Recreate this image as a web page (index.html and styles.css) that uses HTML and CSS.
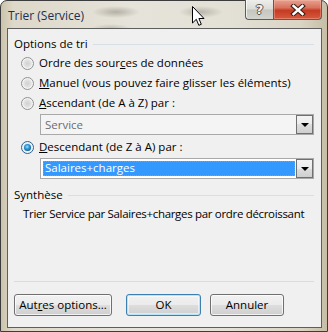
FILE: index.html
```html
<!DOCTYPE html>
<html lang="fr">
<head>
<meta charset="utf-8">
<title>Trier (Service)</title>
<link rel="stylesheet" href="styles.css">
</head>
<body>
<div class="window">
  <div class="titlebar">
    <span class="title">Trier (Service)</span>
    <div class="caption-btns">
      <div class="cap help"><span>?</span></div>
      <div class="cap close">
        <svg width="16" height="12" viewBox="0 0 16 12">
          <path d="M3.5 2 L12.5 10 M12.5 2 L3.5 10" stroke="#3b2018" stroke-width="4.6" stroke-linecap="square"/>
          <path d="M3.5 2 L12.5 10 M12.5 2 L3.5 10" stroke="#ffffff" stroke-width="2.4" stroke-linecap="square"/>
        </svg>
      </div>
    </div>
  </div>
  <div class="client">
    <div class="group-head"><span>Options de tri</span><i class="rule"></i></div>
    <div class="radio-row"><span class="radio"></span><span>Ordre des sour<u>c</u>es de données</span></div>
    <div class="radio-row"><span class="radio"></span><span><u>M</u>anuel (vous pouvez faire glisser les éléments)</span></div>
    <div class="radio-row"><span class="radio"></span><span><u>A</u>scendant (de A à Z) par :</span></div>
    <div class="combo disabled">
      <span class="combo-text">Service</span>
      <span class="drop"><i class="tri"></i></span>
    </div>
    <div class="radio-row r4"><span class="radio checked"></span><span><u>D</u>escendant (de Z à A) par :</span></div>
    <div class="combo active">
      <span class="combo-sel">Salaires+charges</span>
      <span class="drop"><i class="tri"></i></span>
    </div>
    <div class="group-head g2"><span>Synthèse</span><i class="rule"></i></div>
    <div class="summary">Trier Service par Salaires+charges par ordre décroissant</div>
    <div class="spacer"></div>
    <div class="footer">
      <div class="btn b1">Aut<u>r</u>es options...</div>
      <div class="btn ok">OK</div>
      <div class="btn b3">Annuler</div>
    </div>
  </div>
  <svg class="cursor" width="13" height="21" viewBox="0 0 13 21">
    <path d="M0.5 0.5 V17 L4.3 13.3 L6.8 19.3 L9.3 18.3 L6.9 12.5 L12 12.5 Z" fill="#fff" stroke="#000" stroke-linejoin="miter"/>
  </svg>
</div>
</body>
</html>
```

FILE: styles.css
```css
* { box-sizing: border-box; }
html, body { margin: 0; padding: 0; }
body {
  width: 328px;
  height: 332px;
  overflow: hidden;
  font-family: "Open Sans", "Noto Sans", sans-serif;
  font-size: 11.5px;
  color: #000;
  background: #fff;
}
.window {
  position: relative;
  width: 328px;
  height: 332px;
  border: 1px solid #3c3c3c;
  border-radius: 7px 7px 0 0;
  display: flex;
  flex-direction: column;
  background:
    radial-gradient(ellipse 24px 6px at 115px 11px, rgba(120,115,105,0.45), transparent),
    radial-gradient(ellipse 22px 6px at 200px 11px, rgba(120,115,105,0.40), transparent),
    radial-gradient(ellipse 20px 4px at 110px 27px, rgba(120,115,105,0.30), transparent),
    linear-gradient(to right, #cbc3ab 0px, #ddd8c9 12px, #e6e3da 40%, #e3e0d6 70%, #d9d4c4 92%, #c6bea5 100%);
}
.titlebar {
  height: 27px;
  display: flex;
  align-items: flex-start;
  justify-content: space-between;
}
.title {
  margin: 7px 0 0 7px;
  color: #1c2f55;
  font-size: 12px;
  line-height: 16px;
}
.caption-btns {
  display: flex;
  margin-top: -1px;
  margin-right: 5px;
}
.cap {
  height: 20px;
  display: flex;
  align-items: center;
  justify-content: center;
  border: 1px solid #5b5b5b;
  border-top: none;
}
.help {
  width: 28px;
  border-right: none;
  border-radius: 0 0 0 4px;
  background: linear-gradient(to bottom, #eeeeec 0%, #dcdcd8 45%, #c6c6c0 55%, #d4d4ce 100%);
  box-shadow: inset 1px 0 0 rgba(255,255,255,0.7);
}
.help span {
  font-family: "DejaVu Sans", sans-serif;
  font-weight: bold;
  font-size: 13px;
  line-height: 14px;
  color: #f4f4f4;
  text-shadow: -1px 0 0 #55554f, 1px 0 0 #55554f, 0 -1px 0 #55554f, 0 1px 0 #55554f;
}
.close {
  width: 49px;
  border-radius: 0 0 4px 0;
  background: linear-gradient(to bottom, #e7a290 0%, #d8735f 40%, #c43b22 55%, #d55a3f 100%);
  box-shadow: inset 0 0 0 1px rgba(255,200,190,0.35);
}
.close svg { display: block; }
.client {
  flex: 1;
  margin: 0 5px 3px 6px;
  border: 1px solid #5e5e5e;
  background: #f0f0f0;
  padding-top: 5px;
  display: flex;
  flex-direction: column;
}
.group-head {
  height: 19px;
  display: flex;
  align-items: center;
  padding-left: 6px;
  margin-right: 7px;
  line-height: 19px;
}
.group-head .rule {
  flex: 1;
  height: 1px;
  margin-left: 5px;
  margin-top: 1px;
  background: #d5dfe5;
}
.g2 { margin-top: 6px; }
.radio-row {
  height: 20px;
  display: flex;
  align-items: center;
  padding-left: 13px;
  line-height: 20px;
  white-space: nowrap;
}
.radio-row.r4 { margin-top: 2px; }
.radio {
  width: 13px;
  height: 13px;
  margin-right: 5px;
  border-radius: 50%;
  border: 1px solid #8f9293;
  background: radial-gradient(circle at 50% 50%, #d0d0d0 0%, #e2e2e2 45%, #f3f3f3 75%, #ffffff 100%);
  box-shadow: inset 0 0 0 1px #f4f4f4;
  flex: none;
  position: relative;
}
.radio.checked {
  border-color: #2c628b;
  background: radial-gradient(circle at 50% 50%, #bdd7ea 0%, #ffffff 100%);
}
.radio.checked::after {
  content: "";
  position: absolute;
  left: 2px; top: 2px;
  width: 7px; height: 7px;
  border-radius: 50%;
  background: radial-gradient(circle at 45% 40%, #9fe0ff 0%, #2f9fe0 35%, #14528a 80%, #153d63 100%);
}
u { text-decoration: underline; text-underline-offset: 1px; }
.combo {
  height: 21px;
  margin-left: 32px;
  margin-right: 7px;
  margin-top: 1px;
  border: 1px solid #a9a9a9;
  display: flex;
  align-items: stretch;
}
.combo.disabled { background: #f4f4f4; color: #6d6d6d; }
.combo.active { background: #fff; }
.combo-text {
  flex: 1;
  padding-left: 4px;
  line-height: 19px;
}
.combo-sel {
  flex: 1;
  margin: 2px 1px 2px 2px;
  background: #3399ff;
  color: #fff;
  padding-left: 2px;
  line-height: 13px;
  outline: 1px dotted #d98a3a;
  outline-offset: -1px;
}
.drop {
  width: 17px;
  flex: none;
  border: 1px solid #707070;
  background: linear-gradient(to bottom, #f3f3f3 0%, #ebebeb 50%, #dddddd 50%, #cfcfcf 100%);
  display: flex;
  align-items: center;
  justify-content: center;
}
.tri {
  width: 0; height: 0;
  border-left: 4px solid transparent;
  border-right: 4px solid transparent;
  border-top: 4px solid #000;
  margin-top: 1px;
}
.summary {
  height: 20px;
  line-height: 20px;
  padding-left: 15px;
  white-space: nowrap;
  letter-spacing: -0.32px;
}
.spacer { flex: 1; }
.footer {
  margin: 0 7px 0 6px;
  border-top: 1px solid #dcdcdc;
  padding: 12px 0 11px 0;
  display: flex;
}
.btn {
  height: 22px;
  border: 1px solid #707070;
  border-radius: 3px;
  background: linear-gradient(to bottom, #f2f2f2 0%, #ebebeb 48%, #dddddd 52%, #cfcfcf 100%);
  box-shadow: inset 0 0 0 1px rgba(255,255,255,0.75);
  display: flex;
  align-items: center;
  justify-content: center;
  line-height: 20px;
}
.b1 { width: 98px; }
.ok {
  width: 75px;
  margin-left: 14px;
  border-color: #3c7fb1;
  box-shadow: inset 0 0 0 1px #b6e4f8, inset 0 0 0 2px rgba(255,255,255,0.5);
}
.b3 { width: 74px; margin-left: 9px; }
.cursor {
  position: absolute;
  left: 191px;
  top: 5px;
}
```
